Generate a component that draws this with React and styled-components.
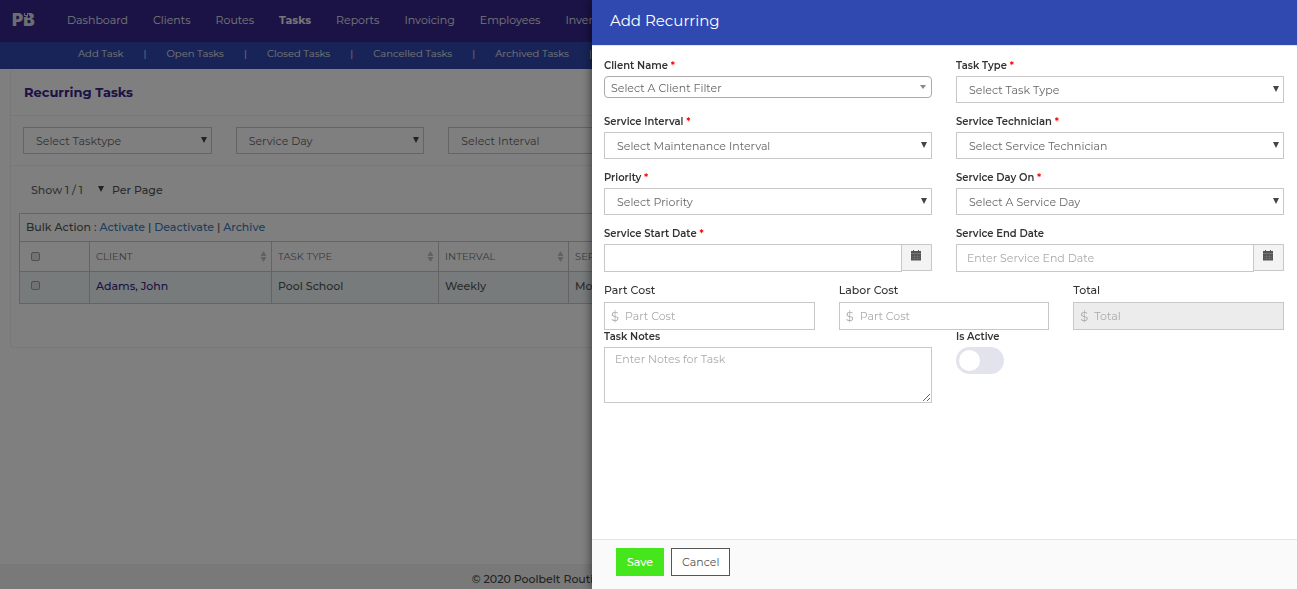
import React from "react";
import styled, { createGlobalStyle, css } from "styled-components";

const indigo = "#36268c";
const blue = "#3049b0";
const line = "#c8c8c8";

const GlobalStyle = createGlobalStyle`
  *, *::before, *::after { box-sizing: border-box; }
  html, body { margin: 0; height: 100%; }
  #root { min-height: 100%; }
  body {
    background: #fff;
    color: #555;
    font-family: Montserrat, Inter, "Liberation Sans", sans-serif;
    font-size: 11px;
    line-height: 16px;
    overflow: hidden;
  }
  button, input, select, textarea { font: inherit; color: inherit; }
`;

const Page = styled.div`
  display: flex;
  flex-direction: column;
  min-height: 100vh;
`;

const NavBar = styled.nav`
  display: flex;
  align-items: center;
  gap: 25px;
  height: 42px;
  padding: 0 12px 2px;
  background: ${indigo};
  white-space: nowrap;
  overflow: hidden;
`;

const Logo = styled.svg`
  flex: none;
  width: 30px;
  height: 26px;
`;

const NavLink = styled.a`
  color: #ececf0;
  text-decoration: none;
  font-weight: ${(p) => (p.$active ? 700 : 400)};
`;

const SubNav = styled.nav`
  display: flex;
  align-items: center;
  gap: 20px;
  height: 27px;
  padding: 0 12px 4px 78px;
  background: ${blue};
  color: #ececf0;
  font-size: 10px;
  white-space: nowrap;
  overflow: hidden;
`;

const Main = styled.main`
  flex: 1;
  padding: 0 10px;
  font-weight: 500;
`;

const Panel = styled.section`
  border: 1px solid #f0f0f0;
  border-top: 0;
  border-radius: 4px;
  padding-bottom: 43px;
`;

const PanelTitle = styled.h1`
  margin: 0;
  padding: 15px 13px;
  border-bottom: 1px solid #f0f0f0;
  color: ${indigo};
  font-size: 13px;
  line-height: 16px;
  font-weight: 700;
`;

const Filters = styled.div`
  display: grid;
  grid-template-columns: repeat(6, 1fr);
  gap: 24px;
  padding: 11px 12px;
  border-bottom: 1px solid #f0f0f0;
`;

const PageSize = styled.div`
  display: flex;
  align-items: center;
  gap: 7px;
  height: 47px;
  padding: 0 20px;
`;

const SelectBox = styled.span`
  position: relative;
  display: block;
  &::after {
    content: "";
    position: absolute;
    right: 5px;
    top: 10px;
    border: solid transparent;
    border-width: 6px 3px 0;
    border-top-color: #444;
    pointer-events: none;
    ${(p) => p.$variant === "combo" && css`
      right: 6px;
      top: 9px;
      border-width: 4px 3px 0;
      border-top-color: #888;
    `}
    ${(p) => p.$variant === "plain" && css`
      right: 1px;
      top: 5px;
    `}
  }
`;

const SelectControl = styled.select`
  appearance: none;
  display: block;
  width: 100%;
  height: 27px;
  margin: 0;
  padding: 0 18px 0 12px;
  border: 1px solid ${line};
  border-radius: 0;
  background: #fff;
  color: #666;
  font-weight: 400;
  outline: 0;
  ${(p) => p.$variant === "combo" && css`
    height: 22px;
    padding: 2px 18px 0 6px;
    border-color: #aaa;
    border-radius: 4px;
  `}
  ${(p) => p.$variant === "plain" && css`
    width: 74px;
    height: 18px;
    padding: 0;
    border: 0;
    font-weight: 500;
  `}
`;

const TableWrap = styled.div`
  padding: 0 8px;
`;

const BulkBar = styled.div`
  height: 28px;
  padding: 5px 6px;
  border: 1px solid ${line};
  border-bottom: 0;
`;

const TextLink = styled.a`
  color: #3a7ab8;
  text-decoration: none;
`;

const Table = styled.table`
  width: 100%;
  table-layout: fixed;
  border-collapse: collapse;
  th, td {
    border: 1px solid ${line};
    padding: 0 6px;
    text-align: left;
    font-weight: 500;
  }
  th { height: 30px; color: #777; font-size: 10px; font-weight: 400; }
  td { height: 32px; padding-bottom: 4px; background: #eef6f7; }
  th:first-child, td:first-child { padding-left: 11px; }
`;

const HeadCell = styled.div`
  display: flex;
  align-items: center;
  justify-content: space-between;
  margin-right: -2px;
`;

const ClientLink = styled.a`
  color: ${indigo};
  font-weight: 500;
  text-decoration: none;
`;

const Tick = styled.input`
  appearance: none;
  display: block;
  width: 9px;
  height: 9px;
  margin: 0;
  border: 1px solid #a0a0a0;
  border-radius: 2px;
  background: #e4e4e4;
`;

const PageFooter = styled.footer`
  padding: 7px 12px 2px;
  background: #f2f2f2;
  text-align: center;
  color: #444;
  font-weight: 500;
`;

const Overlay = styled.div`
  position: fixed;
  inset: 0;
  background: rgba(0, 0, 0, 0.5);
`;

const Drawer = styled.aside`
  position: fixed;
  top: 0;
  right: 0;
  bottom: 0;
  display: flex;
  flex-direction: column;
  width: 706px;
  max-width: 100%;
  border-right: 1px solid #ccc;
  background: #fff;
  box-shadow: 0 0 10px rgba(0, 0, 0, 0.6);
`;

const DrawerTitle = styled.h2`
  margin: 0;
  padding: 11px 18px 14px;
  border-bottom: 1px solid #e6e6ee;
  background: ${blue};
  background-clip: padding-box;
  color: #fff;
  font-size: 15px;
  line-height: 20px;
  font-weight: 400;
`;

const Form = styled.form`
  display: flex;
  flex: 1;
  flex-direction: column;
  min-height: 0;
`;

const FormBody = styled.div`
  flex: 1;
  overflow: auto;
  padding: 13px 13px 0 12px;
`;

const FieldGrid = styled.div`
  display: grid;
  grid-template-columns: repeat(${(p) => p.$columns}, 1fr);
  gap: 12px 24px;
  align-items: start;
  margin-bottom: ${(p) => p.$after || 0}px;
`;

const Field = styled.div`
  display: flex;
  flex-direction: column;
  align-items: stretch;
  gap: 4px;
`;

const Label = styled.label`
  color: #333;
  font-size: ${(p) => (p.$large ? 11 : 10)}px;
  line-height: ${(p) => (p.$large ? 16 : 13)}px;
  font-weight: ${(p) => (p.$large ? 500 : 600)};
`;

const Star = styled.span`
  color: #f00;
`;

const InputGroup = styled.div`
  display: flex;
  align-items: flex-start;
`;

const TextInput = styled.input`
  flex: 1;
  min-width: 0;
  height: 28px;
  padding: 0 10px;
  border: 1px solid ${line};
  border-radius: 0;
  background: #fff;
  outline: 0;
  &::placeholder { color: #aaa; }
`;

const DateButton = styled.button`
  display: flex;
  align-items: center;
  justify-content: center;
  width: 30px;
  height: 27px;
  padding: 0 2px 4px 0;
  border: 1px solid ${line};
  border-left: 0;
  background: #f3f3f3;
`;

const MoneyBox = styled.div`
  display: flex;
  align-items: center;
  gap: 6px;
  height: 28px;
  padding: 0 6px;
  border: 1px solid ${line};
  background: ${(p) => (p.$readOnly ? "#ececec" : "#fff")};
`;

const Dollar = styled.span`
  color: #aaa;
  font-size: 13px;
`;

const MoneyInput = styled.input`
  flex: 1;
  min-width: 0;
  padding: 0;
  border: 0;
  background: transparent;
  outline: 0;
  &::placeholder { color: #aaa; }
`;

const Notes = styled.textarea`
  display: block;
  height: 56px;
  margin: 0;
  padding: 3px 10px;
  border: 1px solid ${line};
  outline: 0;
  resize: both;
  &::placeholder { color: #aaa; }
`;

const Switch = styled.input`
  appearance: none;
  width: 48px;
  height: 27px;
  margin: 0;
  padding: 3px;
  border-radius: 14px;
  background: #e3e3ee;
  &::before {
    content: "";
    display: block;
    width: 21px;
    height: 21px;
    border-radius: 50%;
    background: #fff;
  }
  &:checked::before { margin-left: 21px; }
`;

const DrawerFooter = styled.footer`
  display: flex;
  gap: 7px;
  padding: 8px 24px 13px;
  border-top: 1px solid #e6e6e6;
  background: #fafafa;
`;

const Button = styled.button`
  height: 28px;
  padding: 0 10px;
  border: 1px solid ${(p) => (p.$primary ? "#46e61c" : "#555")};
  background: ${(p) => (p.$primary ? "#46e61c" : "#fff")};
  color: ${(p) => (p.$primary ? "#fff" : "#555")};
  font-weight: ${(p) => (p.$primary ? 500 : 400)};
`;

const CalendarIcon = () => (
  <svg width="10" height="11" viewBox="0 0 10 11" aria-hidden="true">
    <path fill="#555" d="M0 1h2V0h1v1h4V0h1v1h2v2H0z" />
    <path fill="#777" d="M0 3h10v1H0z" />
    <path fill="#555" d="M0 4h10v6.5H0z" />
    <path stroke="#777" strokeWidth=".5" d="M1 6.500h8M1 8.500h8M3.500 4.500v5.500M6.500 4.500v5.500" />
  </svg>
);

const SortIcon = () => (
  <svg width="7" height="11" viewBox="0 0 7 11" aria-hidden="true">
    <path fill="#c2c2c2" d="M3.500 0L6.500 5H.5zM.5 6h6l-3 5z" />
  </svg>
);

function Select({ id, text, variant, label }) {
  return (
    <SelectBox $variant={variant}>
      <SelectControl id={id} $variant={variant} aria-label={label}>
        <option>{text}</option>
      </SelectControl>
    </SelectBox>
  );
}

function FormField({ id, label, required, large, children }) {
  return (
    <Field>
      <Label htmlFor={id} $large={large}>
        {label} {required && <Star>*</Star>}
      </Label>
      {children}
    </Field>
  );
}

function DateField({ id, placeholder }) {
  return (
    <InputGroup>
      <TextInput id={id} placeholder={placeholder} />
      <DateButton type="button" aria-label="Open calendar">
        <CalendarIcon />
      </DateButton>
    </InputGroup>
  );
}

function MoneyField({ id, placeholder, readOnly }) {
  return (
    <MoneyBox $readOnly={readOnly}>
      <Dollar>$</Dollar>
      <MoneyInput id={id} placeholder={placeholder} readOnly={readOnly} />
    </MoneyBox>
  );
}

const navItems = ["Dashboard", "Clients", "Routes", "Tasks", "Reports", "Invoicing", "Employees", "Inventory"];
const subItems = ["Add Task", "Open Tasks", "Closed Tasks", "Cancelled Tasks", "Archived Tasks"];
const filters = ["Select Tasktype", "Service Day", "Select Interval"];
const columns = ["CLIENT", "TASK TYPE", "INTERVAL", "SERVICE DAY"];
const bulkActions = ["Activate", "Deactivate", "Archive"];

export default function App() {
  return (
    <>
      <GlobalStyle />
      <Page>
        <NavBar>
          <Logo viewBox="0 -4 30 26" role="img" aria-label="PB">
            <text x="0" y="15" fill="#dcdcdc" fontFamily="Inter, sans-serif" fontSize="17" fontWeight="900">PB</text>
            <path fill={indigo} d="M10 1h2v2h-2zM13 2h2v2h-2zM16 3h1v2h-1zM12 5h2v1h-2z" />
          </Logo>
          {navItems.map((item) => (
            <NavLink key={item} href="#" $active={item === "Tasks"}>{item}</NavLink>
          ))}
        </NavBar>
        <SubNav>
          {subItems.map((item) => (
            <React.Fragment key={item}>
              <NavLink href="#">{item}</NavLink>
              <span>|</span>
            </React.Fragment>
          ))}
        </SubNav>
        <Main>
          <Panel>
            <PanelTitle>Recurring Tasks</PanelTitle>
            <Filters>
              {filters.map((text) => <Select key={text} text={text} label={text} />)}
            </Filters>
            <PageSize>
              <Select variant="plain" text="Show 1 / 1" label="Rows per page" />
              <span>Per Page</span>
            </PageSize>
            <TableWrap>
              <BulkBar>
                Bulk Action :{" "}
                {bulkActions.map((action, i) => (
                  <React.Fragment key={action}>
                    {i > 0 && " | "}
                    <TextLink href="#">{action}</TextLink>
                  </React.Fragment>
                ))}
              </BulkBar>
              <Table>
                <colgroup>
                  <col width="70" />
                  <col width="182" />
                  <col width="167" />
                  <col width="130" />
                  <col />
                </colgroup>
                <thead>
                  <tr>
                    <th><Tick type="checkbox" aria-label="Select all" /></th>
                    {columns.map((name) => (
                      <th key={name}><HeadCell>{name}<SortIcon /></HeadCell></th>
                    ))}
                  </tr>
                </thead>
                <tbody>
                  <tr>
                    <td><Tick type="checkbox" aria-label="Select Adams, John" /></td>
                    <td><ClientLink href="#">Adams, John</ClientLink></td>
                    <td>Pool School</td>
                    <td>Weekly</td>
                    <td>Monday</td>
                  </tr>
                </tbody>
              </Table>
            </TableWrap>
          </Panel>
        </Main>
        <PageFooter>© 2020 Poolbelt Routing &amp; Billing Software. All Rights Reserved.</PageFooter>
      </Page>
      <Overlay />
      <Drawer>
        <DrawerTitle>Add Recurring</DrawerTitle>
        <Form>
          <FormBody>
            <FieldGrid $columns={2} $after={10}>
              <FormField id="client" label="Client Name" required>
                <Select id="client" variant="combo" text="Select A Client Filter" />
              </FormField>
              <FormField id="type" label="Task Type" required>
                <Select id="type" text="Select Task Type" />
              </FormField>
              <FormField id="interval" label="Service Interval" required>
                <Select id="interval" text="Select Maintenance Interval" />
              </FormField>
              <FormField id="technician" label="Service Technician" required>
                <Select id="technician" text="Select Service Technician" />
              </FormField>
              <FormField id="priority" label="Priority" required>
                <Select id="priority" text="Select Priority" />
              </FormField>
              <FormField id="day" label="Service Day On" required>
                <Select id="day" text="Select A Service Day" />
              </FormField>
              <FormField id="start" label="Service Start Date" required>
                <DateField id="start" />
              </FormField>
              <FormField id="end" label="Service End Date">
                <DateField id="end" placeholder="Enter Service End Date" />
              </FormField>
            </FieldGrid>
            <FieldGrid $columns={3}>
              <FormField id="part" label="Part Cost" large>
                <MoneyField id="part" placeholder="Part Cost" />
              </FormField>
              <FormField id="labor" label="Labor Cost" large>
                <MoneyField id="labor" placeholder="Part Cost" />
              </FormField>
              <FormField id="total" label="Total" large>
                <MoneyField id="total" placeholder="Total" readOnly />
              </FormField>
            </FieldGrid>
            <FieldGrid $columns={2}>
              <FormField id="notes" label="Task Notes">
                <Notes id="notes" placeholder="Enter Notes for Task" />
              </FormField>
              <FormField id="active" label="Is Active">
                <Switch id="active" type="checkbox" />
              </FormField>
            </FieldGrid>
          </FormBody>
          <DrawerFooter>
            <Button type="submit" $primary>Save</Button>
            <Button type="button">Cancel</Button>
          </DrawerFooter>
        </Form>
      </Drawer>
    </>
  );
}
